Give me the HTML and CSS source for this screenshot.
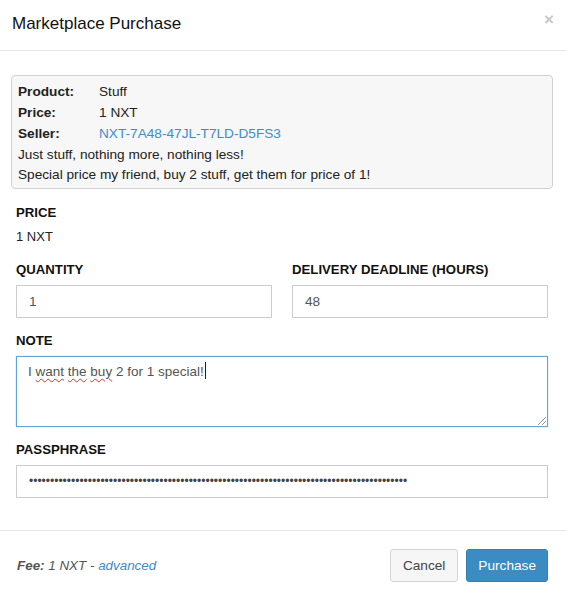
FILE: index.html
```html
<!DOCTYPE html>
<html>
<head>
<meta charset="utf-8">
<link rel="stylesheet" href="styles.css">
</head>
<body>
<div class="modal">
  <div class="modal-header">
    <h4 class="modal-title">Marketplace Purchase</h4>
    <span class="close">×</span>
  </div>
  <div class="modal-body">
    <div class="info-box">
      <table class="info-table">
        <tr><th>Product:</th><td>Stuff</td></tr>
        <tr><th>Price:</th><td>1 NXT</td></tr>
        <tr><th>Seller:</th><td><a class="link">NXT-7A48-47JL-T7LD-D5FS3</a></td></tr>
      </table>
      <p class="desc">Just stuff, nothing more, nothing less!<br>Special price my friend, buy 2 stuff, get them for price of 1!</p>
    </div>

    <div class="form-group">
      <label class="lbl">PRICE</label>
      <div class="static">1 NXT</div>
    </div>

    <div class="row">
      <div class="form-group">
        <label class="lbl">QUANTITY</label>
        <div class="input">1</div>
      </div>
      <div class="form-group">
        <label class="lbl">DELIVERY DEADLINE (HOURS)</label>
        <div class="input">48</div>
      </div>
    </div>

    <div class="form-group">
      <label class="lbl">NOTE</label>
      <div class="textarea">I <span class="spell">want</span> <span class="spell">the</span> <span class="spell">buy</span> 2 for 1 special!<span class="caret"></span><span class="grip"></span></div>
    </div>

    <div class="form-group">
      <label class="lbl">PASSPHRASE</label>
      <div class="input pass">••••••••••••••••••••••••••••••••••••••••••••••••••••••••••••••••••••••••••••••••••••••••••</div>
    </div>
  </div>
  <div class="modal-footer">
    <div class="fee"><b>Fee:</b> 1 NXT - <a class="link">advanced</a></div>
    <div class="buttons">
      <button class="btn btn-default">Cancel</button>
      <button class="btn btn-primary">Purchase</button>
    </div>
  </div>
</div>
</body>
</html>
```

FILE: styles.css
```css
html, body {
  margin: 0;
  padding: 0;
  background: #fff;
}
body {
  font-family: "Liberation Sans", Arial, sans-serif;
  font-size: 13.65px;
  color: #222;
}
.modal {
  width: 566px;
  height: 599px;
  display: flex;
  flex-direction: column;
}
.modal-header {
  height: 50px;
  flex: none;
  border-bottom: 1px solid #e5e5e5;
  display: flex;
  align-items: center;
  justify-content: space-between;
  padding: 0 12px;
}
.modal-title {
  margin: 0;
  font-size: 17px;
  font-weight: normal;
  color: #111;
  padding-bottom: 2px;
}
.close {
  font-size: 17px;
  font-weight: bold;
  color: #c8c8c8;
  margin-top: -10px;
}
.modal-body {
  padding: 24px 18px 32px 16px;
  flex: none;
}
.info-box {
  margin: 0 -5px;
  border: 1px solid #d0d0d0;
  border-radius: 4px;
  background: #f7f7f7;
  padding: 5px 6px 3px 6px;
}
.info-table {
  border-collapse: collapse;
}
.info-table th {
  text-align: left;
  font-weight: bold;
  width: 81px;
  padding: 0;
  height: 21px;
  line-height: 21px;
}
.info-table td {
  padding: 0;
  line-height: 21px;
}
.desc {
  margin: 1px 0 0 0;
  line-height: 20px;
}
.link {
  color: #428bca;
  text-decoration: none;
}
.form-group {
  margin-top: 13px;
  min-width: 0;
}
.info-box + .form-group {
  margin-top: 14px;
}
.lbl {
  display: block;
  font-weight: bold;
  font-size: 13.2px;
  line-height: 20px;
  margin-bottom: 5px;
  color: #111;
}
.static {
  line-height: 20px;
  margin-top: -1px;
  font-size: 13px;
}
.row {
  display: grid;
  grid-template-columns: 1fr 1fr;
  column-gap: 20px;
}
.input {
  height: 33px;
  box-sizing: border-box;
  border: 1px solid #ccc;
  padding: 0 12px;
  line-height: 31px;
  color: #555;
  font-size: 13.65px;
  background: #fff;
  overflow: hidden;
  white-space: nowrap;
}
.pass {
  font-size: 12px;
  color: #444;
}
.textarea {
  position: relative;
  height: 71px;
  box-sizing: border-box;
  border: 1px solid #5ea6d9;
  box-shadow: 0 0 2px rgba(102, 175, 233, 0.4);
  padding: 5px 11px;
  line-height: 20px;
  color: #555;
  font-size: 13.5px;
}
.spell {
  text-decoration: underline wavy #e03030;
  text-decoration-thickness: 1px;
  text-underline-offset: 2px;
}
.caret {
  display: inline-block;
  width: 1px;
  height: 17px;
  background: #222;
  vertical-align: -3px;
  margin-left: 1px;
}
.grip {
  position: absolute;
  right: 1px;
  bottom: 1px;
  width: 8px;
  height: 8px;
  background: linear-gradient(135deg, transparent 45%, #999 45%, #999 52%, transparent 52%, transparent 70%, #999 70%, #999 77%, transparent 77%);
}
.modal-footer {
  border-top: 1px solid #e5e5e5;
  flex: 1;
  padding: 0 18px 0 17px;
  display: flex;
  align-items: center;
  justify-content: space-between;
}
.fee {
  font-style: italic;
  color: #555;
  font-size: 13.4px;
}
.fee b {
  color: #555;
}
.buttons {
  display: flex;
  gap: 8px;
}
.btn {
  font-family: "Liberation Sans", Arial, sans-serif;
  font-size: 13.65px;
  height: 33px;
  padding: 0 11px;
  border-radius: 3px;
  border: 1px solid #ccc;
  cursor: pointer;
}
.btn-default {
  background: #f6f6f6;
  color: #444;
  border-color: #d4d4d4;
  padding: 0 12px;
}
.btn-primary {
  background: #3a8cc2;
  border-color: #3580b2;
  color: #fff;
  padding: 0 11px;
}
```
